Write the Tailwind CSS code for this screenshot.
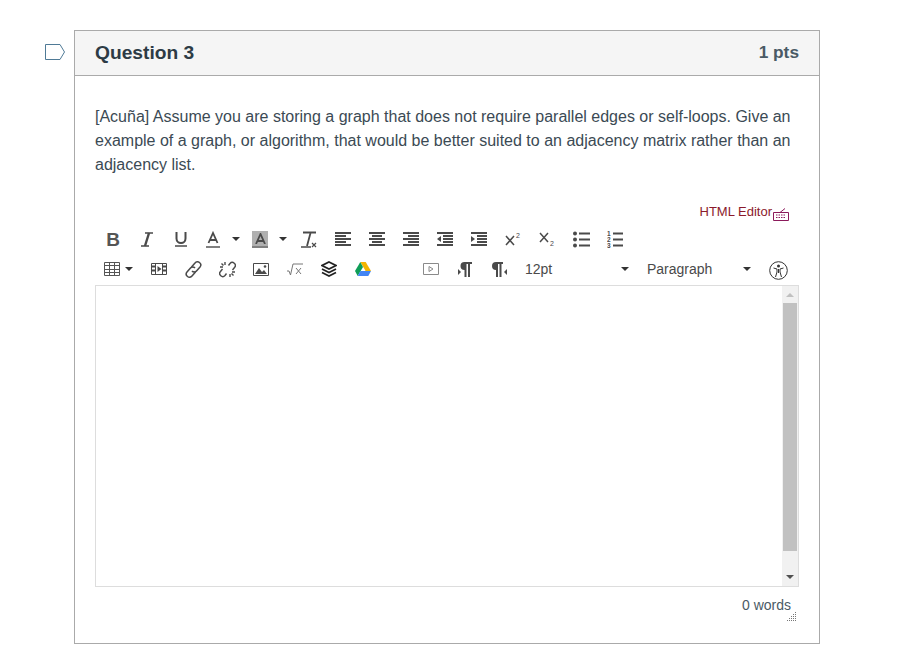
<!DOCTYPE html>
<html lang="en">
<head>
  <meta charset="UTF-8" />
  <title>Question 3</title>
  <script src="https://cdn.jsdelivr.net/npm/@tailwindcss/browser@4"></script>
</head>
<body class="bg-white font-['Liberation_Sans',Arial,sans-serif] text-[#2d3b45]">
<div class="flex items-start pt-[30px] pl-[45px]">

  <!-- question flag -->
  <svg class="mt-[14px] mr-[9px] shrink-0" width="20" height="16" viewBox="0 0 20 16" fill="none"><path d="M.5.500h14.500l4.500 7.500-4.500 7.500H.5z" stroke="#4f7a96"/></svg>

  <div class="w-[746px] h-[614px] border border-[#aaaaaa]">
    <div class="flex h-[45px] items-center justify-between bg-[#f5f5f5] border-b border-[#aaaaaa] pl-[20px] pr-[20px]">
      <h2 class="text-[19.200px] font-bold">Question 3</h2>
      <span class="text-[17.300px] font-bold text-[#4a5a65]">1 pts</span>
    </div>

    <div class="px-[20px] pt-[29px]">
      <p class="text-[16px] leading-[24px] text-[#3b4a54]">[Acuña] Assume you are storing a graph that does not require parallel edges or self-loops. Give an example of a graph, or algorithm, that would be better suited to an adjacency matrix rather than an adjacency list.</p>

      <div class="flex justify-end items-center h-[16px] mt-[27px] pr-[9px] text-[#8b1a2b]">
        <span class="text-[13px] -mt-[1px]">HTML Editor</span>
        <svg class="mt-[3px]" width="18" height="14" viewBox="0 0 18 14" fill="none" stroke="#8b1a5b"><path d="M1.500 5.500h15v8h-15zM8 5.500l5-4"/><path d="M4 8h10M4 10.500h10" stroke-dasharray="1.500 1"/></svg>
      </div>

      <!-- toolbar row 1 -->
      <div class="flex items-center h-[30px] mt-[4px] pl-[1px] text-[#4a4a4a]">
        <div class="flex w-[34px] justify-center"><span class="text-[19px] leading-none font-bold text-[#555555]">B</span></div>
        <div class="flex w-[34px] justify-center"><svg width="12" height="15" viewBox="0 0 12 15" fill="none" stroke="#4a4a4a"><path d="M4 1h8M0 14h8" stroke-width="1.500"/><path d="M8 1L4 14" stroke-width="2.400"/></svg></div>
        <div class="flex w-[34px] justify-center"><svg width="14" height="16" viewBox="0 0 14 16" fill="none" stroke="#4a4a4a" stroke-width="2"><path d="M2.500 1v6.500a4.500 4.500 0 0 0 9 0V1"/><path d="M1 15h12" stroke="#777777"/></svg></div>
        <div class="flex w-[30px] justify-center"><svg width="16" height="17" viewBox="0 0 16 17" fill="none"><path d="M3.500 12L8 2l4.500 10M5 9h6" stroke="#4a4a4a" stroke-width="1.800"/><path d="M1 16h14" stroke="#808080" stroke-width="2"/></svg></div>
        <div class="flex w-[16px] justify-center"><svg width="8" height="4" viewBox="0 0 8 4"><path d="M0 0h8L4 4z" fill="#333333"/></svg></div>
        <div class="flex w-[32px] justify-center"><div class="flex h-[17px] w-[16px] items-center justify-center bg-[#b0b0b0] border-b-2 border-[#808080]"><svg width="11" height="11" viewBox="0 0 11 11" fill="none"><path d="M1 11L5.500 1 10 11M2.500 8h6" stroke="#4a4a4a" stroke-width="1.800"/></svg></div></div>
        <div class="flex w-[14px] justify-center"><svg width="8" height="4" viewBox="0 0 8 4"><path d="M0 0h8L4 4z" fill="#333333"/></svg></div>
        <div class="flex w-[34px] ml-[2px] justify-center"><svg width="16" height="17" viewBox="0 0 16 17" fill="none" stroke="#4a4a4a"><path d="M2 1.500h13" stroke-width="2"/><path d="M9.500 2L6 15" stroke-width="1.800"/><path d="M0 16h10" stroke-width="1.500"/><path d="M11 12l4 4M15 12l-4 4" stroke-width="1.200"/></svg></div>
        <div class="flex w-[34px] justify-center"><svg width="16" height="15" viewBox="0 0 16 15" stroke="#4a4a4a" stroke-width="2"><path d="M0 1h16M0 4h11M0 7h16M0 10h11M0 13h16" /></svg></div>
        <div class="flex w-[34px] justify-center"><svg width="16" height="15" viewBox="0 0 16 15" stroke="#4a4a4a" stroke-width="2"><path d="M0 1h16M3 4h10M0 7h16M3 10h10M0 13h16"/></svg></div>
        <div class="flex w-[34px] justify-center"><svg width="16" height="15" viewBox="0 0 16 15" stroke="#4a4a4a" stroke-width="2"><path d="M0 1h16M5 4h11M0 7h16M5 10h11M0 13h16"/></svg></div>
        <div class="flex w-[34px] justify-center"><svg width="16" height="15" viewBox="0 0 16 15"><path d="M0 1h16M6 4h10M6 7h10M6 10h10M0 13h16" stroke="#4a4a4a" stroke-width="2"/><path d="M4 4v6L0 7z" fill="#4a4a4a"/></svg></div>
        <div class="flex w-[34px] justify-center"><svg width="16" height="15" viewBox="0 0 16 15"><path d="M0 1h16M6 4h10M6 7h10M6 10h10M0 13h16" stroke="#4a4a4a" stroke-width="2"/><path d="M0 4v6l4-3z" fill="#4a4a4a"/></svg></div>
        <div class="flex w-[34px] justify-center"><svg width="16" height="14" viewBox="0 0 16 14"><path d="M1 4l8 9M9 4l-8 9" fill="none" stroke="#4a4a4a" stroke-width="1.500"/><text x="11" y="6" font-size="7" fill="#4a4a4a">2</text></svg></div>
        <div class="flex w-[34px] justify-center"><svg width="16" height="14" viewBox="0 0 16 14"><path d="M1 1l8 9M9 1l-8 9" fill="none" stroke="#4a4a4a" stroke-width="1.500"/><text x="11" y="14" font-size="7" fill="#4a4a4a">2</text></svg></div>
        <div class="flex w-[34px] justify-center"><svg width="17" height="17" viewBox="0 0 17 17"><g fill="#4a4a4a"><circle cx="2" cy="2.500" r="2"/><circle cx="2" cy="8.500" r="2"/><circle cx="2" cy="14.500" r="2"/></g><path d="M6 2.500h11M6 8.500h11M6 14.500h11" stroke="#4a4a4a" stroke-width="2"/></svg></div>
        <div class="flex w-[34px] justify-center"><svg width="16" height="17" viewBox="0 0 16 17"><g fill="#4a4a4a" font-size="6.500" font-weight="bold"><text x="0" y="5">1</text><text x="0" y="11">2</text><text x="0" y="17">3</text></g><path d="M6 2.500h10M6 8.500h10M6 14.500h10" stroke="#4a4a4a" stroke-width="2"/></svg></div>
      </div>

      <!-- toolbar row 2 -->
      <div class="flex items-center h-[30px] pl-[1px] text-[14px] text-[#4a4a4a]">
        <div class="flex w-[46px] items-center pl-[8px]">
          <svg width="16" height="14" viewBox="0 0 16 14" fill="none" stroke="#555555"><path d="M.5.500h15v13H.5zM.5 3.500h15M.5 7.500h15M.5 10.500h15M5.500.500v13M10.500.500v13"/></svg>
          <svg class="ml-[5px]" width="8" height="4" viewBox="0 0 8 4"><path d="M0 0h8L4 4z" fill="#333333"/></svg>
        </div>
        <div class="flex w-[34px] justify-center"><svg width="16" height="12" viewBox="0 0 16 12"><path d="M.5.500h15v11H.5zM4.500.500v11M11.500.500v11" fill="none" stroke="#4a4a4a"/><path d="M6.500 3v6l4-3z" fill="#4a4a4a"/><path d="M1 2.500h3v2H1zM1 6.500h3v2H1zM12 2.500h3v2h-3zM12 6.500h3v2h-3z" fill="#4a4a4a"/></svg></div>
        <div class="flex w-[34px] justify-center"><svg width="17" height="17" viewBox="0 0 17 17" fill="none" stroke="#4a4a4a" stroke-width="1.500"><path d="M6.500 6l3.500-4a3 3 0 0 1 5 4l-3.500 4a3 3 0 0 1-4.500 0"/><path d="M10.500 11l-3.500 4a3 3 0 0 1-5-4l3.500-4a3 3 0 0 1 4.500 0"/></svg></div>
        <div class="flex w-[34px] justify-center"><svg width="17" height="17" viewBox="0 0 17 17" fill="none" stroke="#4a4a4a" stroke-width="1.400"><path d="M9.500 4.500l1.500-2a3 3 0 0 1 4.500 4l-2 2.500M7.500 12.500l-1.500 2a3 3 0 0 1-4.500-4l2-2.500M6 1v3M1 6h3M11 16v-3M16 11h-3M2.500 2.500l2 2M14.500 14.500l-2-2"/></svg></div>
        <div class="flex w-[34px] justify-center"><svg width="16" height="13" viewBox="0 0 16 13"><path d="M.5.500h15v12H.5z" fill="none" stroke="#4a4a4a"/><path d="M2 11l4-6 3 4 2-2 3 4z" fill="#4a4a4a"/><circle cx="12" cy="3.500" r="1.300" fill="#4a4a4a"/></svg></div>
        <div class="flex w-[34px] justify-center"><svg width="16" height="13" viewBox="0 0 16 13" fill="none" stroke="#777777"><path d="M0 8h2l1.500 4L6 1h10M9 5l5 6M14 5l-5 6"/></svg></div>
        <div class="flex w-[34px] justify-center"><svg width="16" height="16" viewBox="0 0 16 16" fill="none" stroke="#222222" stroke-width="1.800"><path d="M8 1l7 3.500-7 3.500-7-3.500z"/><path d="M1 8l7 3.500L15 8M1 11.500L8 15l7-3.500"/></svg></div>
        <div class="flex w-[34px] justify-center"><svg width="16" height="14" viewBox="0 0 16 14"><path d="M5.300 0h5.400L16 9h-5.400z" fill="#f4b400"/><path d="M5.300 0L0 9l2.700 5L8 5z" fill="#0f9d58"/><path d="M2.700 14h10.600L16 9H5.400z" fill="#4285f4"/></svg></div>
        <div class="w-[34px]"></div>
        <div class="flex w-[34px] justify-center"><svg width="16" height="12" viewBox="0 0 16 12" fill="none" stroke="#8a8a8a"><path d="M.5.500h15v11H.5z"/><path d="M6 3.500v5l4-2.500z"/></svg></div>
        <div class="flex w-[34px] justify-center"><svg width="14" height="15" viewBox="0 0 14 15"><path d="M3 0h11v2h-2v13h-2V2H8.500v13h-2V8A4 4 0 0 1 6.500 0z" fill="#4a4a4a"/><path d="M0 7v6l3-3z" fill="#4a4a4a"/></svg></div>
        <div class="flex w-[34px] justify-center"><svg width="15" height="15" viewBox="0 0 15 15"><path d="M4 0h7v2H9.500v13h-2V2H6v13H4V8A4 4 0 0 1 4 0z" fill="#4a4a4a"/><path d="M15 7v6l-3-3z" fill="#4a4a4a"/></svg></div>
        <div class="flex w-[117px] items-center justify-between pl-[9px] pr-[4px]">
          <span>12pt</span>
          <svg width="8" height="4" viewBox="0 0 8 4"><path d="M0 0h8L4 4z" fill="#333333"/></svg>
        </div>
        <div class="flex w-[122px] items-center justify-between pl-[14px] pr-[4px]">
          <span>Paragraph</span>
          <svg width="8" height="4" viewBox="0 0 8 4"><path d="M0 0h8L4 4z" fill="#333333"/></svg>
        </div>
        <svg class="ml-[14px] mt-[2px]" width="19" height="19" viewBox="0 0 19 19" fill="none"><circle cx="9.500" cy="9.500" r="8.800" stroke="#333333" stroke-width="1"/><circle cx="9.500" cy="5" r="1.500" fill="#333333"/><path d="M4.500 7l3.500 1v3l-1.500 5M14.500 7L11 8v3l1.500 5M9.500 8v4" stroke="#333333" stroke-width="1"/></svg>
      </div>

      <!-- editor -->
      <div class="flex h-[302px] mt-[1px] border border-[#dddddd]">
        <div class="flex-1"></div>
        <div class="flex w-[16px] flex-col items-center bg-[#f1f1f1]">
          <svg class="mt-[7px] mb-[6px]" width="8" height="4" viewBox="0 0 8 4"><path d="M0 4h8L4 0z" fill="#c0c0c0"/></svg>
          <div class="w-[14px] h-[248px] bg-[#c1c1c1]"></div>
          <svg class="mt-[24px]" width="8" height="4" viewBox="0 0 8 4"><path d="M0 0h8L4 4z" fill="#505050"/></svg>
        </div>
      </div>

      <!-- status bar -->
      <div class="relative flex justify-end pt-[9px] pr-[8px] text-[14px] leading-[18px] text-[#4a5a65]">
        <span>0 words</span>
        <svg class="absolute right-[3px] top-[25px]" width="9" height="9" viewBox="0 0 9 9" fill="#777777"><path d="M8 0h1v1H8zM6 2h1v1H6zM8 2h1v1H8zM4 4h1v1H4zM6 4h1v1H6zM8 4h1v1H8zM2 6h1v1H2zM4 6h1v1H4zM6 6h1v1H6zM8 6h1v1H8zM0 8h1v1H0zM2 8h1v1H2zM4 8h1v1H4zM6 8h1v1H6zM8 8h1v1H8z"/></svg>
      </div>
    </div>
  </div>
</div>
</body>
</html>
